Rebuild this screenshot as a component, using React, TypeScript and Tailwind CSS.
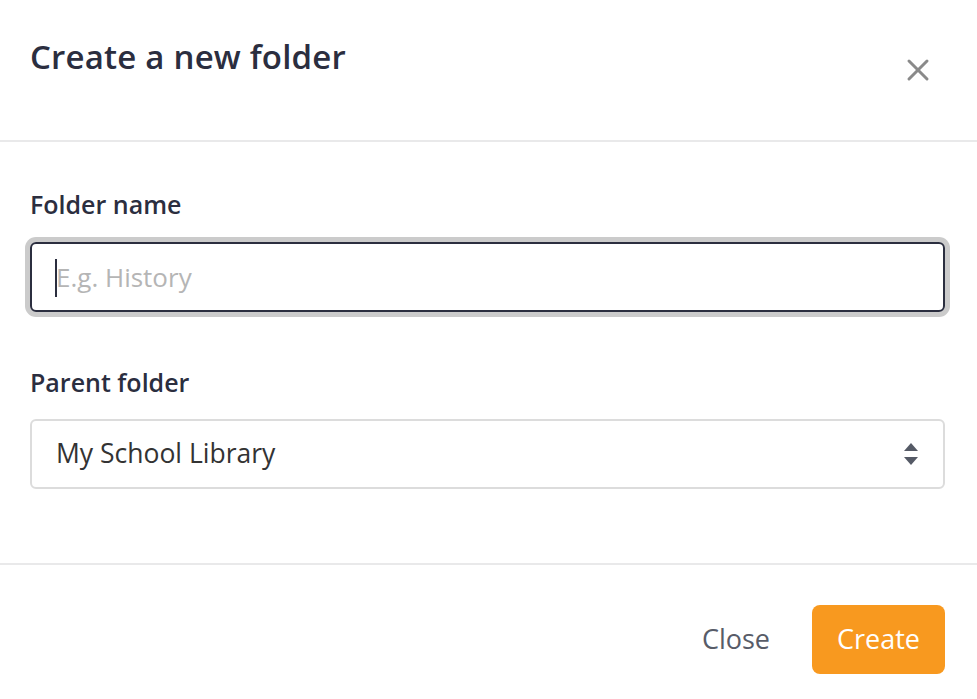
import { X } from "lucide-react";

export default function App() {
  return (
    <div
      className="w-[977px] h-[699px] bg-white flex flex-col text-[#2b2e3f]"
      style={{ fontFamily: '"Open Sans", "Noto Sans", sans-serif' }}
    >
      <header className="h-[142px] shrink-0 border-b-2 border-[#e9e9ea] pl-[30px] pr-[41px] flex justify-between">
        <h1 className="pt-[30px] text-[33px] leading-[54px] font-semibold tracking-[0.2px]">Create a new folder</h1>
        <button type="button" className="mt-[52px] h-9 w-9 flex items-center justify-center text-[#8a8a8a]">
          <X className="w-9 h-9" strokeWidth={2} />
        </button>
      </header>

      <main className="flex-1 pl-[30px] pr-[32px] pt-[44px]">
        <label className="block text-[25px] leading-9 font-semibold">Folder name</label>
        <div className="relative mt-[20px]">
          <input
            type="text"
            placeholder="E.g. History"
            className="w-full h-[70px] rounded-[6px] border-2 border-[#2b2e3f] px-[24px] text-[26px] outline-none ring-[5px] ring-[#cbcbcb] placeholder:text-[#b5b5b5]"
          />
          <span className="absolute left-[25px] top-[17px] h-[38px] w-[2px] bg-[#2b2e3f]" />
        </div>

        <label className="block mt-[52px] text-[25px] leading-9 font-semibold">Parent folder</label>
        <div className="relative mt-[19px]">
          <select
            defaultValue="lib"
            className="w-full h-[70px] appearance-none rounded-[6px] border-2 border-[#dcdcdc] bg-white px-[24px] text-[26.5px] text-[#333] outline-none"
          >
            <option value="lib">My School Library</option>
          </select>
          <svg
            viewBox="0 0 14 22"
            className="pointer-events-none absolute right-[27px] top-[24px] w-[14px] h-[22px] fill-[#555a66]"
          >
            <path d="M7 0 L14 8 H0 Z" />
            <path d="M7 22 L14 14 H0 Z" />
          </svg>
        </div>
      </main>

      <footer className="h-[136px] shrink-0 border-t-2 border-[#e9e9ea] flex items-start justify-end gap-[10px] pr-[32px] pt-[40px]">
        <button type="button" className="h-[69px] px-[32px] text-[27px] text-[#585c68] rounded-[8px]">
          Close
        </button>
        <button type="button" className="h-[69px] px-[25px] text-[27px] text-white bg-[#f8991f] rounded-[8px]">
          Create
        </button>
      </footer>
    </div>
  );
}
